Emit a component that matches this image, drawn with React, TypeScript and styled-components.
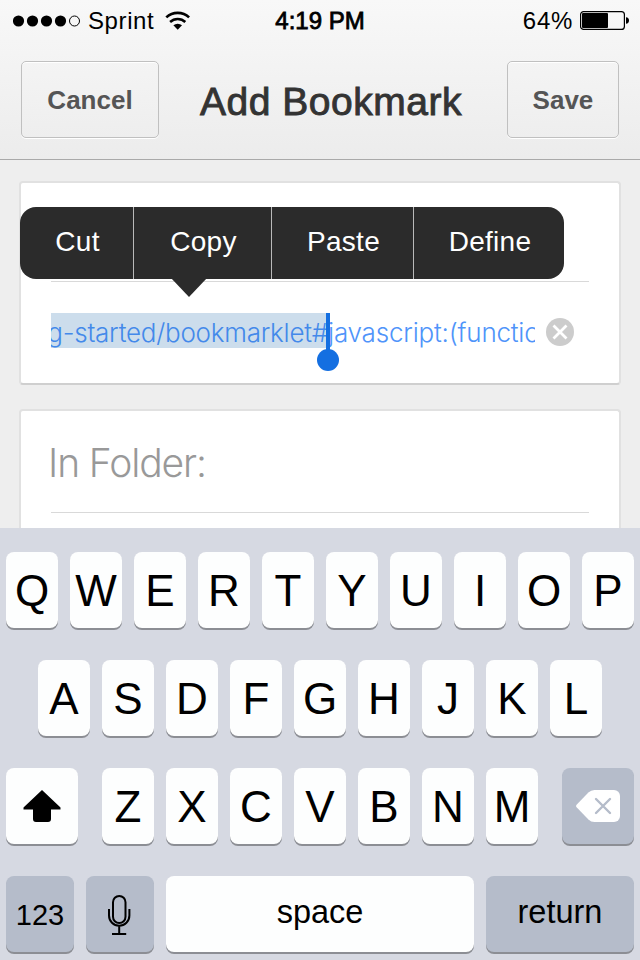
import React from "react";
import styled, { createGlobalStyle } from "styled-components";

const GlobalStyle = createGlobalStyle`
  * { box-sizing: border-box; }
  body {
    margin: 0;
    background: #eeeeee;
    font-family: "Liberation Sans", Arial, sans-serif;
    color: #000;
  }
  button { font: inherit; color: inherit; padding: 0; margin: 0; border: 0; background: none; }
`;

const Screen = styled.div`
  width: 640px;
  height: 960px;
  overflow: hidden;
  display: flex;
  flex-direction: column;
`;

const TopArea = styled.div`
  height: 160px;
  flex: none;
  background: linear-gradient(#f8f8f8, #ececec);
  border-bottom: 1px solid #a9a9a9;
`;

const StatusBar = styled.div`
  height: 40px;
  padding: 0 10px 0 13px;
  display: grid;
  grid-template-columns: 1fr 100px 1fr;
  font-size: 24px;
  line-height: 41px;
`;

const StatusGroup = styled.div<{ $end?: boolean }>`
  display: flex;
  align-items: center;
  height: 41px;
  justify-content: ${(p) => (p.$end ? "flex-end" : "flex-start")};
`;

const Carrier = styled.span`
  margin: 0 11px 0 7px;
  letter-spacing: 0.6px;
`;

const Clock = styled.span`
  text-align: center;
  white-space: nowrap;
  margin-left: -3px;
  -webkit-text-stroke: 0.8px #000;
`;

const Percent = styled.span`
  margin-right: 7px;
  letter-spacing: 0.7px;
`;

const NavBar = styled.div`
  display: flex;
  align-items: center;
  justify-content: space-between;
  margin: 21px 21px 0;
  height: 77px;
`;

const NavButton = styled.button<{ $width: number }>`
  width: ${(p) => p.$width}px;
  height: 77px;
  border: 1px solid #c0c0c0;
  border-radius: 5px;
  box-shadow: 0 1px 0 #fff, inset 0 1px 0 #fff;
  background: linear-gradient(#f4f4f4, #eeeeee);
  color: #555;
  font-size: 26px;
  font-weight: 700;
  line-height: 76px;
`;

const Title = styled.h1`
  margin: 0 0 0 -4px;
  padding-top: 4px;
  font-size: 39px;
  font-weight: 400;
  line-height: 80px;
  letter-spacing: 0.5px;
  color: #333;
  -webkit-text-stroke: 0.9px #333;
`;

const Form = styled.main`
  height: 368px;
  flex: none;
  overflow: hidden;
  padding: 21px 19px 0;
`;

const Card = styled.section`
  height: 204px;
  margin-bottom: 24px;
  padding: 0 30px;
  border: 2px solid #e1e1e1;
  border-bottom-color: #cfcfcf;
  border-radius: 4px;
  background: #fff;
`;

const NameField = styled.div`
  position: relative;
  height: 99px;
  border-bottom: 1px solid #d9d9d9;
`;

const UrlField = styled.div`
  display: flex;
  align-items: center;
  height: 97px;
`;

const UrlText = styled.div`
  display: flex;
  width: 484px;
  height: 70px;
  align-items: center;
`;

const UrlClip = styled.div<{ $selected?: boolean }>`
  display: flex;
  flex: ${(p) => (p.$selected ? "0 0 277px" : "1")};
  min-width: 0;
  height: 35px;
  overflow: hidden;
  justify-content: ${(p) => (p.$selected ? "flex-end" : "flex-start")};
  background: ${(p) => (p.$selected ? "#ccddec" : "transparent")};
  color: ${(p) => (p.$selected ? "#4389ea" : "#4f94fa")};
  font-family: Inter, sans-serif;
  font-weight: 300;
  font-size: 26px;
  line-height: 40px;
  white-space: nowrap;
  letter-spacing: ${(p) => (p.$selected ? "-0.24px" : "-0.2px")};
`;

const Caret = styled.i`
  position: relative;
  width: 4px;
  height: 37px;
  margin: 2px -2px 0;
  background: #146fe1;
  z-index: 1;
  &::after {
    content: "";
    position: absolute;
    left: -9px;
    top: 36px;
    width: 22px;
    height: 22px;
    border-radius: 50%;
    background: #146fe1;
  }
`;

const ClearButton = styled.button`
  display: flex;
  margin: 2px 0 0 11px;
`;

const FolderLabel = styled.div`
  height: 101px;
  padding-top: 3px;
  margin-left: -3px;
  font-family: Inter, sans-serif;
  font-size: 39px;
  font-weight: 300;
  line-height: 98px;
  letter-spacing: -1.1px;
  color: #999;
`;

const Divider = styled.div`
  height: 1px;
  background: #d9d9d9;
`;

const EditMenu = styled.div`
  position: absolute;
  left: -31px;
  top: 24px;
  display: flex;
  width: 544px;
  height: 72px;
  border-radius: 16px;
  background: #2b2b2b;
  z-index: 2;
  &::after {
    content: "";
    position: absolute;
    left: 151px;
    top: 71px;
    border: 18.5px solid transparent;
    border-bottom: 0;
    border-top: 19px solid #2b2b2b;
  }
`;

const MenuItem = styled.button<{ $width: number }>`
  display: flex;
  justify-content: center;
  width: ${(p) => p.$width}px;
  height: 72px;
  padding-left: 2px;
  color: #fff;
  font-size: 28px;
  line-height: 69px;
  letter-spacing: 0.3px;
  & + & { border-left: 1px solid #b9b9b9; }
`;

const Keyboard = styled.div`
  height: 432px;
  flex: none;
  display: flex;
  flex-direction: column;
  gap: 32px;
  padding: 24px 6px 0;
  background: #d6d9e2;
`;

const KeyRow = styled.div<{ $spread?: boolean }>`
  display: flex;
  justify-content: ${(p) => (p.$spread ? "space-between" : "center")};
  gap: 12px;
  height: 76px;
`;

const KeyGroup = styled.div`
  display: flex;
  gap: 12px;
`;

const Key = styled.button<{ $width?: number; $dark?: boolean; $size?: number; $line?: number }>`
  display: flex;
  justify-content: center;
  align-items: flex-start;
  flex: none;
  width: ${(p) => p.$width ?? 52}px;
  height: 76px;
  border-radius: 8px;
  background: ${(p) => (p.$dark ? "#b5bcca" : "#fdfefe")};
  box-shadow: 0 2px 0 #8c8e94;
  font-size: ${(p) => p.$size ?? 44}px;
  line-height: ${(p) => p.$line ?? 78}px;
`;

const SignalIcon = () => (
  <svg width="68" height="12" viewBox="0 0 68 12">
    {[5.5, 19.5, 33.5, 47.5].map((x) => (
      <circle key={x} cx={x} cy="6" r="5.6" />
    ))}
    <circle cx="61.5" cy="6" r="5" fill="none" stroke="#000" strokeWidth="1" />
  </svg>
);

const WifiIcon = () => (
  <svg width="26" height="20" viewBox="0 0 26 20">
    <g fill="none" stroke="#000">
      <path d="M1.3 6.4a16.5 16.5 0 0 1 22.8 0" strokeWidth="2.6" />
      <path d="M5.1 11a11 11 0 0 1 15.2 0" strokeWidth="2.5" />
    </g>
    <path d="M8.4 14.3a6.5 6.5 0 0 1 8.6 0L12.7 18.8z" />
  </svg>
);

const BatteryIcon = () => (
  <svg width="50" height="20" viewBox="0 0 50 20">
    <rect x="0.6" y="0.6" width="43.8" height="17.8" rx="3" fill="none" stroke="#000" strokeWidth="1.2" />
    <rect x="2" y="2" width="26" height="15" rx="1" />
    <path d="M46 6.2c2 .2 3 1.4 3 3.3s-1 3.1-3 3.3z" />
  </svg>
);

const ClearIcon = () => (
  <svg width="28" height="28" viewBox="0 0 28 28">
    <circle cx="14" cy="14" r="14" fill="#ccc" />
    <path d="M7.5 7.5l13 13M20.5 7.5l-13 13" stroke="#fff" strokeWidth="2.8" />
  </svg>
);

const ShiftIcon = () => (
  <svg width="38" height="76" viewBox="0 0 38 76">
    <path d="M19 22L37.5 39.5V41.5H28V51a3 3 0 0 1-3 3H13a3 3 0 0 1-3-3V41.5H.5V39.5z" />
  </svg>
);

const BackspaceIcon = () => (
  <svg width="44" height="76" viewBox="0 0 44 76">
    <path
      d="M.6 36.7L12.4 24.6Q15 22 18.5 22H38a6 6 0 0 1 6 6V48a6 6 0 0 1-6 6H18.5Q15 54 12.4 51.4L.6 39.3Q-.5 38 .6 36.7z"
      fill="#fff"
    />
    <path d="M20 31l14 14M34 31L20 45" stroke="#b5bcca" strokeWidth="2.4" strokeLinecap="round" />
  </svg>
);

const MicIcon = () => (
  <svg width="24" height="76" viewBox="0 0 24 76" fill="none" stroke="#000" strokeWidth="2">
    <rect x="5" y="20" width="12.5" height="27" rx="6.25" />
    <path d="M1 33V39.5a10 10 0 0 0 20.4 0V33M11.2 50V58M4 58H18.2" />
  </svg>
);

const letterKeys = (letters: string) =>
  letters.split("").map((letter) => <Key key={letter}>{letter}</Key>);

export default function App() {
  return (
    <Screen>
      <GlobalStyle />
      <TopArea>
        <StatusBar>
          <StatusGroup>
            <SignalIcon />
            <Carrier>Sprint</Carrier>
            <WifiIcon />
          </StatusGroup>
          <Clock>4:19 PM</Clock>
          <StatusGroup $end>
            <Percent>64%</Percent>
            <BatteryIcon />
          </StatusGroup>
        </StatusBar>
        <NavBar>
          <NavButton $width={138}>Cancel</NavButton>
          <Title>Add Bookmark</Title>
          <NavButton $width={112}>Save</NavButton>
        </NavBar>
      </TopArea>
      <Form>
        <Card>
          <NameField>
            <EditMenu>
              <MenuItem $width={113}>Cut</MenuItem>
              <MenuItem $width={138}>Copy</MenuItem>
              <MenuItem $width={142}>Paste</MenuItem>
              <MenuItem $width={151}>Define</MenuItem>
            </EditMenu>
          </NameField>
          <UrlField>
            <UrlText>
              <UrlClip $selected>g-started/bookmarklet#</UrlClip>
              <Caret />
              <UrlClip>javascript:(functio</UrlClip>
            </UrlText>
            <ClearButton aria-label="Clear">
              <ClearIcon />
            </ClearButton>
          </UrlField>
        </Card>
        <Card>
          <FolderLabel>In Folder:</FolderLabel>
          <Divider />
        </Card>
      </Form>
      <Keyboard>
        <KeyRow>{letterKeys("QWERTYUIOP")}</KeyRow>
        <KeyRow>{letterKeys("ASDFGHJKL")}</KeyRow>
        <KeyRow $spread>
          <Key $width={72} aria-label="Shift"><ShiftIcon /></Key>
          <KeyGroup>{letterKeys("ZXCVBNM")}</KeyGroup>
          <Key $width={72} $dark aria-label="Delete"><BackspaceIcon /></Key>
        </KeyRow>
        <KeyRow>
          <Key $width={68} $dark $size={29} $line={79}>123</Key>
          <Key $width={68} $dark aria-label="Dictate"><MicIcon /></Key>
          <Key $width={308} $size={32.5} $line={73}>space</Key>
          <Key $width={148} $dark $size={32.5} $line={73}>return</Key>
        </KeyRow>
      </Keyboard>
    </Screen>
  );
}
